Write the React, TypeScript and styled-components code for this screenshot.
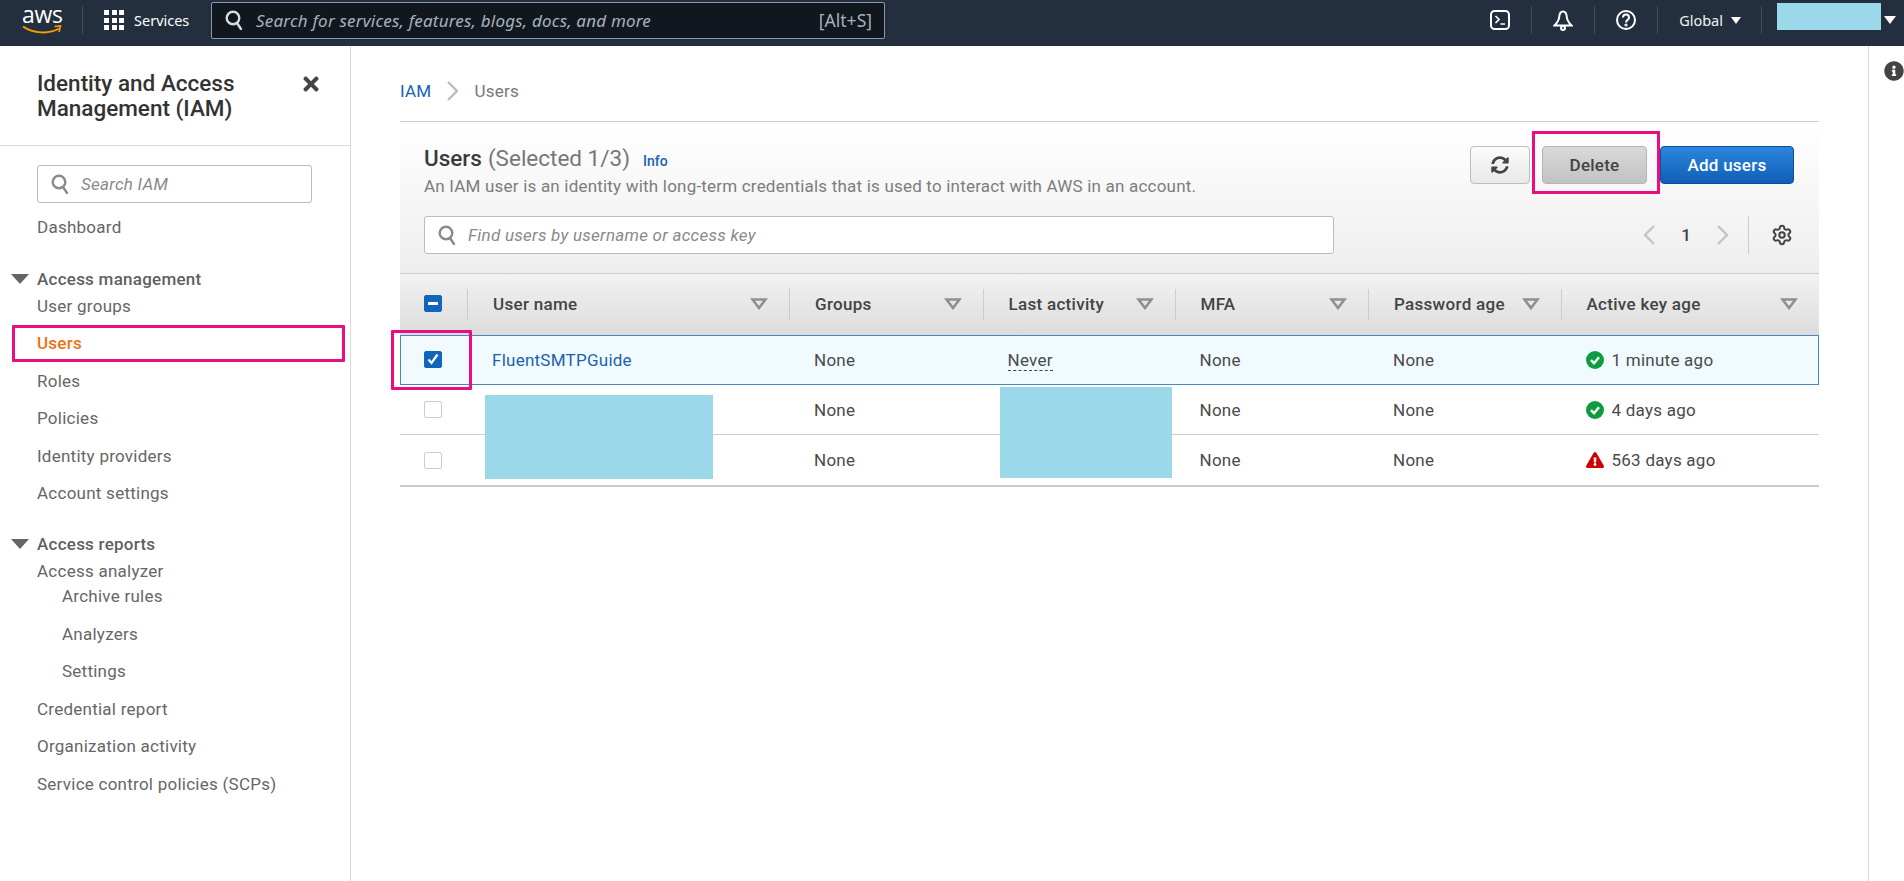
import styled, { createGlobalStyle } from 'styled-components';
import { FaInfoCircle, FaSyncAlt, FaTimes, FaExclamationTriangle } from 'react-icons/fa';
import { Settings } from 'lucide-react';

const COLUMNS = '67px 322px 193.5px 192px 193.5px 192.5px 1fr';
const PINK = '#ea0f80';
const BLOCK = '#9ad8ea';

const GlobalStyle = createGlobalStyle`
  html, body {
    margin: 0;
    height: 100%;
    overflow: hidden;
    background: #fff;
    font-family: Roboto, "Liberation Sans", sans-serif;
  }
  * { box-sizing: border-box; }
`;

const Page = styled.div`
  display: flex;
  flex-direction: column;
  height: 100vh;
`;

/* top bar */
const TopBar = styled.header`
  display: flex;
  align-items: center;
  flex: none;
  height: 46px;
  background: #232f3e;
  color: #fff;
  font-family: "Noto Sans", sans-serif;
  font-size: 14.5px;
  padding: 0 4px 6px 0;
`;

const Logo = styled.div`
  position: relative;
  width: 82px;
  height: 40px;
  padding-left: 22px;
`;

const LogoText = styled.span`
  display: block;
  width: 40px;
  text-align: center;
  font-family: "Open Sans", sans-serif;
  font-size: 23px;
  line-height: 24px;
  letter-spacing: -0.3px;
  padding-top: 2px;
`;

const LogoSmile = styled.svg`
  display: block;
  margin-top: -1px;
`;

const BarDivider = styled.span`
  flex: none;
  width: 1px;
  height: 28px;
  background: #414d5c;
`;

const ServicesLink = styled.div`
  display: flex;
  align-items: center;
  gap: 10px;
  margin-left: 21px;
  width: 107px;
`;

const AppsGrid = styled.div`
  display: grid;
  grid-template-columns: repeat(3, 5px);
  gap: 2.5px;
`;

const AppsDot = styled.i`
  width: 5px;
  height: 5px;
  background: #fff;
`;

const GlobalSearch = styled.div`
  display: flex;
  align-items: center;
  width: 674px;
  height: 37px;
  padding: 0 12px 0 13px;
  background: #10171f;
  border: 1px solid #8d99a8;
  border-radius: 2px;
  color: #c6ccd2;
`;

const GlobalHint = styled.span`
  margin-left: 13px;
  font-size: 17px;
  letter-spacing: 0.2px;
  font-style: italic;
  color: #a9b1ba;
  flex: 1;
`;

const Shortcut = styled.span`
  font-size: 17.5px;
  color: #a9b1ba;
`;

const BarRight = styled.div`
  display: flex;
  align-items: center;
  margin-left: auto;
  height: 40px;
`;

const BarIcon = styled.svg`
  display: block;
  flex: none;
  margin: 0 21px;
`;

const RegionLabel = styled.span`
  display: flex;
  align-items: center;
  gap: 8px;
  margin: 0 20px 0 21px;
  color: #eef1f4;
`;

const Caret = styled.i`
  display: block;
  width: 0;
  height: 0;
  border-left: 5px solid transparent;
  border-right: 5px solid transparent;
  border-top: 7px solid #fff;
`;

const AccountBlock = styled.div`
  align-self: flex-start;
  margin: 3px 3px 0 15px;
  width: 104px;
  height: 27px;
  background: ${BLOCK};
`;

const AccountCaret = styled(Caret)`
  border-left-width: 6px;
  border-right-width: 6px;
  border-top-width: 8px;
  margin-right: 4px;
`;

/* page body */
const Body = styled.div`
  display: flex;
  flex: 1;
  min-height: 0;
`;

const Sidebar = styled.aside`
  flex: none;
  width: 351px;
  border-right: 1px solid #d9d9d9;
  color: #666;
  font-size: 17px;
  letter-spacing: 0.25px;
`;

const SideHeader = styled.div`
  display: flex;
  justify-content: space-between;
  height: 100px;
  padding: 25px 28px 0 37px;
  border-bottom: 1px solid #d9d9d9;
`;

const SideTitle = styled.h2`
  margin: 0;
  width: 240px;
  font-size: 22.5px;
  font-weight: 500;
  letter-spacing: 0;
  line-height: 25px;
  color: #333;
`;

const CloseBtn = styled.span`
  display: block;
  color: #444;
  font-size: 22px;
  line-height: 1;
  margin-top: 2px;
`;

const SearchField = styled.div<{ $width: number }>`
  display: flex;
  align-items: center;
  gap: 12px;
  width: ${({ $width }) => $width}px;
  height: 37.5px;
  padding-left: 13px;
  background: #fff;
  border: 1px solid #bbb;
  border-radius: 3px;
  font-size: 17px;
  letter-spacing: 0.25px;
  font-style: italic;
  color: #8a8a8a;
`;

const SideSearch = styled.div`
  margin: 19px 0 6px 37px;
`;

const SideNav = styled.nav`
  padding-left: 37px;
`;

const NavItem = styled.div<{ $active?: boolean; $sub?: boolean }>`
  position: relative;
  display: flex;
  align-items: center;
  height: 37.5px;
  padding-left: ${({ $sub }) => ($sub ? 25 : 0)}px;
  font-weight: ${({ $active }) => ($active ? 500 : 400)};
  color: ${({ $active }) => ($active ? '#ec7211' : '#666')};

  ${({ $active }) =>
    $active &&
    `&::after {
      content: '';
      position: absolute;
      inset: 0 5px 0 -25px;
      border: 3px solid ${PINK};
      border-radius: 1px;
    }`}
`;

const SubList = styled.div`
  margin-top: -12px;
`;

const SectionLabel = styled.div<{ $gap: number }>`
  position: relative;
  display: flex;
  align-items: center;
  height: 16px;
  margin-top: ${({ $gap }) => $gap}px;
  font-weight: 500;
  color: #5f5f5f;
`;

const SectionArrow = styled.i`
  position: absolute;
  left: -26px;
  top: 3px;
  width: 0;
  height: 0;
  border-left: 9px solid transparent;
  border-right: 9px solid transparent;
  border-top: 10px solid #666;
`;

const Main = styled.main`
  flex: 1;
  min-width: 0;
  padding: 0 49px;
`;

const Breadcrumb = styled.div`
  display: flex;
  align-items: center;
  gap: 16px;
  height: 76px;
  padding-top: 14px;
  border-bottom: 1px solid #ccc;
  font-size: 17px;
  letter-spacing: 0.25px;
  color: #777;
`;

const CrumbLink = styled.a`
  color: #1a62b0;
`;

const Panel = styled.section`
  position: relative;
`;

const PanelHead = styled.div`
  height: 151px;
  padding: 23px 25px 0 24px;
  background: linear-gradient(#fff 0%, #f9f9f9 35%, #eee 100%);
`;

const HeadRow = styled.div`
  display: flex;
  justify-content: space-between;
  height: 48px;
`;

const TitleBlock = styled.div`
  display: flex;
  flex-direction: column;
`;

const Title = styled.h1`
  display: flex;
  align-items: baseline;
  margin: 0;
  font-size: 22.5px;
  line-height: 26px;
  font-weight: 500;
  color: #3b3b3b;
`;

const Counter = styled.span`
  margin-left: 6px;
  font-weight: 400;
  color: #777;
`;

const InfoLink = styled.a`
  margin-left: 13px;
  font-size: 14px;
  font-weight: 500;
  color: #1a62b0;
`;

const Description = styled.p`
  margin: 0;
  font-size: 17px;
  letter-spacing: 0.2px;
  line-height: 24px;
  color: #7d7d7d;
`;

const Actions = styled.div`
  display: flex;
  margin-top: 1px;
`;

const Button = styled.button<{ $kind: 'plain' | 'muted' | 'primary'; $width: number; $marked?: boolean }>`
  position: relative;
  display: flex;
  align-items: center;
  justify-content: center;
  width: ${({ $width }) => $width}px;
  height: 38px;
  padding: 0;
  border-radius: 4px;
  font-family: Roboto, sans-serif;
  font-size: 17px;
  letter-spacing: 0.25px;
  font-weight: 500;
  border: 1px solid
    ${({ $kind }) => ($kind === 'primary' ? '#0b4f9c' : $kind === 'muted' ? '#b5b5b5' : '#bdbdbd')};
  background: ${({ $kind }) =>
    $kind === 'primary'
      ? 'linear-gradient(#2b85de, #0f5fb5)'
      : $kind === 'muted'
        ? 'linear-gradient(#d9d9d9, #c2c2c2)'
        : 'linear-gradient(#fbfbfb, #e8e8e8)'};
  color: ${({ $kind }) => ($kind === 'primary' ? '#fff' : '#444')};

  ${({ $marked }) =>
    $marked &&
    `&::after {
      content: '';
      position: absolute;
      inset: -16px -14px -11px -11px;
      border: 3px solid ${PINK};
    }`}
`;

const DeleteButton = styled(Button)`
  margin: 0 13px 0 12px;
`;

const SearchRow = styled.div`
  display: flex;
  justify-content: space-between;
  align-items: center;
  height: 38px;
  margin-top: 23px;
`;

const Pager = styled.div`
  display: flex;
  align-items: center;
  height: 38px;
  margin-right: 1px;
  font-size: 17px;
  font-weight: 500;
  color: #444;
`;

const PagerNumber = styled.span`
  width: 62px;
  text-align: center;
`;

const PagerRule = styled.span`
  width: 1px;
  height: 38px;
  margin: 0 22px 0 20px;
  background: #ccc;
`;

const Table = styled.div`
  position: relative;
  border-top: 1px solid #ccc;
`;

const HeadGrid = styled.div`
  display: grid;
  grid-template-columns: ${COLUMNS};
  height: 61px;
  background: linear-gradient(#f2f2f2, #dcdcdc);
`;

const HeadCell = styled.div`
  position: relative;
  display: flex;
  align-items: center;
  justify-content: space-between;
  padding: 0 21px 2px 26px;
  font-size: 17px;
  letter-spacing: 0.3px;
  font-weight: 500;
  color: #444;

  &::before {
    content: '';
    position: absolute;
    left: 0;
    top: 15px;
    width: 1px;
    height: 31px;
    background: #ccc;
  }
`;

const CheckCell = styled.div<{ $marked?: boolean }>`
  position: relative;
  display: flex;
  align-items: center;
  padding-left: 24px;

  ${({ $marked }) =>
    $marked &&
    `&::after {
      content: '';
      position: absolute;
      inset: -5px -5px -5px -9px;
      border: 3px solid ${PINK};
      border-radius: 1px;
    }`}
`;

const Checkbox = styled.span<{ $on?: boolean }>`
  display: flex;
  align-items: center;
  justify-content: center;
  width: 18px;
  height: 17px;
  margin-top: ${({ $on }) => ($on ? -2 : 0)}px;
  border-radius: 2px;
  background: ${({ $on }) => ($on ? '#1166bb' : '#fff')};
  border: 1px solid ${({ $on }) => ($on ? '#1166bb' : '#ccc')};
`;

const Minus = styled.i`
  width: 10px;
  height: 2.5px;
  background: #fff;
`;

const Row = styled.div<{ $selected?: boolean; $last?: boolean }>`
  display: grid;
  grid-template-columns: ${COLUMNS};
  height: ${({ $last }) => ($last ? 52 : 50)}px;
  background: ${({ $selected }) => ($selected ? '#f1faff' : '#fff')};
  border-bottom: ${({ $last, $selected }) =>
    $selected ? 'none' : $last ? '2px solid #ccc' : '1px solid #ccc'};
  box-shadow: ${({ $selected }) => ($selected ? 'inset 0 0 0 1px #4a87c0' : 'none')};
  font-size: 17px;
  letter-spacing: 0.25px;
  color: #4a4a4a;
`;

const Cell = styled.div`
  display: flex;
  align-items: center;
  gap: 8px;
  padding-left: 25px;
`;

const UserLink = styled.a`
  color: #1a62b0;
`;

const Dashed = styled.span`
  border-bottom: 1px dashed #444;
  line-height: 20px;
`;

const Redaction = styled.div<{ $left: number; $top: number; $width: number; $height: number }>`
  position: absolute;
  left: ${({ $left }) => $left}px;
  top: ${({ $top }) => $top}px;
  width: ${({ $width }) => $width}px;
  height: ${({ $height }) => $height}px;
  background: ${BLOCK};
`;

const HelpRail = styled.aside`
  flex: none;
  width: 36px;
  border-left: 1px solid #d9d9d9;
  padding: 15px 0 0 15px;
  color: #444;
  font-size: 20px;
  line-height: 1;
`;

const SearchGlyph = ({ color }: { color: string }) => (
  <svg width="18" height="20" viewBox="0 0 18 20" fill="none" stroke={color} strokeWidth="2.4">
    <circle cx="8" cy="8" r="6.3" />
    <path d="M12 13l4 6" strokeLinecap="round" />
  </svg>
);

const SortGlyph = () => (
  <svg width="18" height="12" viewBox="0 0 18 12" fill="none" stroke="#8f8f8f" strokeWidth="2.6">
    <path d="M2.5 1.5h13L9 10z" />
  </svg>
);

const OkGlyph = () => (
  <svg width="18" height="18" viewBox="0 0 18 18">
    <circle cx="9" cy="9" r="9" fill="#0e9c41" />
    <path d="M5 9.2l3 3 5-6" fill="none" stroke="#fff" strokeWidth="2.4" />
  </svg>
);

const ChevronGlyph = ({ flip, color }: { flip?: boolean; color: string }) => (
  <svg width="11" height="20" viewBox="0 0 11 20" fill="none" stroke={color} strokeWidth="2.4">
    <path d={flip ? 'M1 1l9 9-9 9' : 'M10 1l-9 9 9 9'} />
  </svg>
);

const rows = [
  { name: 'FluentSMTPGuide', activity: 'Never', age: '1 minute ago', ok: true },
  { name: '', activity: '', age: '4 days ago', ok: true },
  { name: '', activity: '', age: '563 days ago', ok: false },
];

const heads = ['User name', 'Groups', 'Last activity', 'MFA', 'Password age', 'Active key age'];

export default function App() {
  return (
    <Page>
      <GlobalStyle />
      <TopBar>
        <Logo>
          <LogoText>aws</LogoText>
          <LogoSmile width="40" height="10" viewBox="0 0 40 10" fill="none">
            <path d="M1 1.5c10 7 26 8 36 2" stroke="#f90" strokeWidth="2" />
            <path d="M32.5 1.5l6-.5-1.5 6" stroke="#f90" strokeWidth="1.6" />
          </LogoSmile>
        </Logo>
        <BarDivider />
        <ServicesLink>
          <AppsGrid>
            {Array.from({ length: 9 }, (_, i) => (
              <AppsDot key={i} />
            ))}
          </AppsGrid>
          Services
        </ServicesLink>
        <GlobalSearch>
          <SearchGlyph color="#d5dbdb" />
          <GlobalHint>Search for services, features, blogs, docs, and more</GlobalHint>
          <Shortcut>[Alt+S]</Shortcut>
        </GlobalSearch>
        <BarRight>
          <BarIcon width="20" height="20" viewBox="0 0 20 20" fill="none" stroke="#fff" strokeWidth="2">
            <rect x="1" y="1" width="18" height="18" rx="3.5" />
            <path d="M5.5 6l3.5 3.5-3.5 3.5M10.5 14h4.5" strokeWidth="1.7" />
          </BarIcon>
          <BarDivider />
          <BarIcon width="20" height="21" viewBox="0 0 20 21" fill="none" stroke="#fff" strokeWidth="2">
            <path d="M10 1.5c-3 0-3.6 2.8-3.8 5.5C6 10.5 4 13 1.5 15.5h17C16 13 14 10.5 13.8 7 13.6 4.3 13 1.5 10 1.5z" />
            <circle cx="10" cy="18" r="2" />
          </BarIcon>
          <BarDivider />
          <BarIcon width="20" height="20" viewBox="0 0 20 20" fill="none" stroke="#fff" strokeWidth="2">
            <circle cx="10" cy="10" r="9" />
            <path d="M7 7.5c0-4 6-4 6 0 0 2.5-3 2.5-3 5" />
            <circle cx="10" cy="15" r="0.6" />
          </BarIcon>
          <BarDivider />
          <RegionLabel>
            Global
            <Caret />
          </RegionLabel>
          <BarDivider />
          <AccountBlock />
          <AccountCaret />
        </BarRight>
      </TopBar>
      <Body>
        <Sidebar>
          <SideHeader>
            <SideTitle>Identity and Access Management (IAM)</SideTitle>
            <CloseBtn>
              <FaTimes />
            </CloseBtn>
          </SideHeader>
          <SideSearch>
            <SearchField $width={275}>
              <SearchGlyph color="#8a8a8a" />
              Search IAM
            </SearchField>
          </SideSearch>
          <SideNav>
            <NavItem>Dashboard</NavItem>
            <SectionLabel $gap={25}>
              <SectionArrow />
              Access management
            </SectionLabel>
            <NavItem>User groups</NavItem>
            <NavItem $active>Users</NavItem>
            <NavItem>Roles</NavItem>
            <NavItem>Policies</NavItem>
            <NavItem>Identity providers</NavItem>
            <NavItem>Account settings</NavItem>
            <SectionLabel $gap={24}>
              <SectionArrow />
              Access reports
            </SectionLabel>
            <NavItem>Access analyzer</NavItem>
            <SubList>
              <NavItem $sub>Archive rules</NavItem>
              <NavItem $sub>Analyzers</NavItem>
              <NavItem $sub>Settings</NavItem>
            </SubList>
            <NavItem>Credential report</NavItem>
            <NavItem>Organization activity</NavItem>
            <NavItem>Service control policies (SCPs)</NavItem>
          </SideNav>
        </Sidebar>
        <Main>
          <Breadcrumb>
            <CrumbLink>IAM</CrumbLink>
            <ChevronGlyph flip color="#bbb" />
            <span>Users</span>
          </Breadcrumb>
          <Panel>
            <PanelHead>
              <HeadRow>
                <TitleBlock>
                  <Title>
                    Users
                    <Counter>(Selected 1/3)</Counter>
                    <InfoLink>Info</InfoLink>
                  </Title>
                  <Description>
                    An IAM user is an identity with long-term credentials that is used to interact with AWS in an
                    account.
                  </Description>
                </TitleBlock>
                <Actions>
                  <Button $kind="plain" $width={60}>
                    <FaSyncAlt size={18} />
                  </Button>
                  <DeleteButton $kind="muted" $width={105} $marked>
                    Delete
                  </DeleteButton>
                  <Button $kind="primary" $width={134}>
                    Add users
                  </Button>
                </Actions>
              </HeadRow>
              <SearchRow>
                <SearchField $width={910}>
                  <SearchGlyph color="#8a8a8a" />
                  Find users by username or access key
                </SearchField>
                <Pager>
                  <ChevronGlyph color="#c4c4c4" />
                  <PagerNumber>1</PagerNumber>
                  <ChevronGlyph flip color="#c4c4c4" />
                  <PagerRule />
                  <Settings size={22} strokeWidth={2.2} />
                </Pager>
              </SearchRow>
            </PanelHead>
            <Table>
              <HeadGrid>
                <CheckCell>
                  <Checkbox $on>
                    <Minus />
                  </Checkbox>
                </CheckCell>
                {heads.map((h) => (
                  <HeadCell key={h}>
                    {h}
                    <SortGlyph />
                  </HeadCell>
                ))}
              </HeadGrid>
              {rows.map((r, i) => (
                <Row key={r.age} $selected={i === 0} $last={i === 2}>
                  <CheckCell $marked={i === 0}>
                    <Checkbox $on={i === 0}>
                      {i === 0 && (
                        <svg width="12" height="12" viewBox="0 0 12 12" fill="none" stroke="#fff" strokeWidth="2.2">
                          <path d="M1.5 6.5l3 3.5 6-8.5" />
                        </svg>
                      )}
                    </Checkbox>
                  </CheckCell>
                  <Cell>{r.name && <UserLink>{r.name}</UserLink>}</Cell>
                  <Cell>None</Cell>
                  <Cell>{r.activity && <Dashed>{r.activity}</Dashed>}</Cell>
                  <Cell>None</Cell>
                  <Cell>None</Cell>
                  <Cell>
                    {r.ok ? <OkGlyph /> : <FaExclamationTriangle size={18} color="#d10000" />}
                    {r.age}
                  </Cell>
                </Row>
              ))}
              <Redaction $left={85} $top={121} $width={228} $height={84} />
              <Redaction $left={600} $top={113} $width={172} $height={91} />
            </Table>
          </Panel>
        </Main>
        <HelpRail>
          <FaInfoCircle />
        </HelpRail>
      </Body>
    </Page>
  );
}
